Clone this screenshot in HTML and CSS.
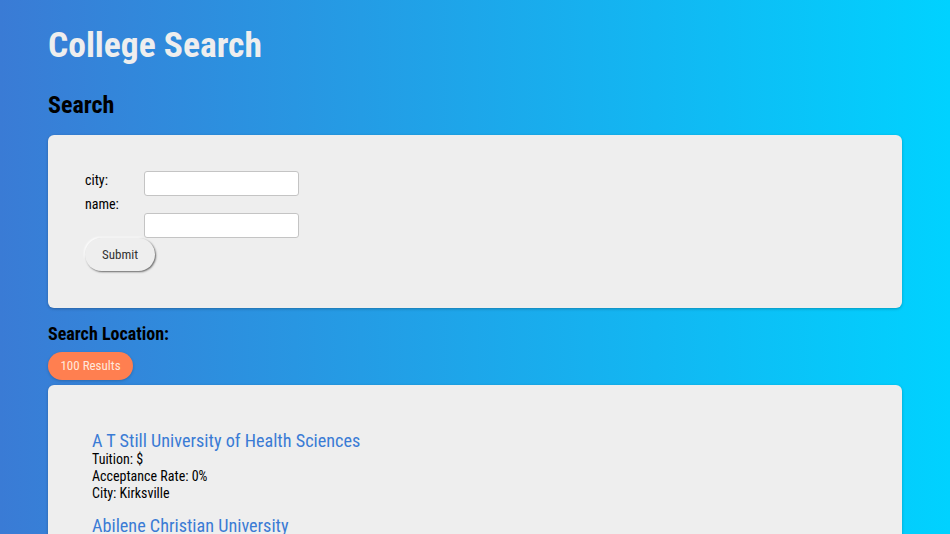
FILE: index.html
```html
<!DOCTYPE html>
<html>
<head>
<meta charset="utf-8">
<link rel="stylesheet" href="styles.css">
</head>
<body>
<div class="page">
  <h1 class="title">College Search</h1>
  <h2 class="section">Search</h2>
  <div class="card form-card">
    <form class="search-form">
      <div class="labels">
        <label>city:</label>
        <label>name:</label>
      </div>
      <div class="inputs">
        <input type="text" class="field">
        <input type="text" class="field">
      </div>
    </form>
    <button class="submit">Submit</button>
  </div>
  <h3 class="location">Search Location:</h3>
  <span class="badge">100 Results</span>
  <div class="card results">
    <div class="item">
      <a class="name" href="#">A T Still University of Health Sciences</a>
      <div class="line">Tuition: $</div>
      <div class="line">Acceptance Rate: 0%</div>
      <div class="line">City: Kirksville</div>
    </div>
    <div class="item">
      <a class="name" href="#">Abilene Christian University</a>
      <div class="line">Tuition: $</div>
      <div class="line">Acceptance Rate: 0%</div>
      <div class="line">City: Abilene</div>
    </div>
  </div>
</div>
</body>
</html>
```
FILE: styles.css
```css
html, body {
  margin: 0;
  padding: 0;
}
body {
  background: linear-gradient(to right, #3a7bd5, #00d2ff);
  font-family: "Roboto Condensed", "Liberation Sans Narrow", Roboto, sans-serif;
  min-height: 534px;
  overflow: hidden;
}
.page {
  padding: 0 48px;
}
.title {
  margin: 0;
  padding-top: 24px;
  font-size: 35.5px;
  line-height: 42px;
  font-weight: 700;
  color: #eeeeee;
}
.section {
  margin: 25px 0 0;
  font-size: 24px;
  line-height: 28px;
  font-weight: 700;
  color: #000;
}
.card {
  background: #eeeeee;
  border-radius: 6px;
  box-shadow: 0 1px 3px rgba(0,0,0,0.25);
}
.form-card {
  margin-top: 16px;
  height: 173px;
  box-sizing: border-box;
  padding: 33px 37px 0;
}
.search-form {
  display: flex;
}
.labels {
  display: flex;
  flex-direction: column;
  width: 59px;
}
.labels label {
  font-size: 14px;
  line-height: 24px;
  color: #000;
}
.inputs {
  display: flex;
  flex-direction: column;
  gap: 17px;
  padding-top: 3px;
}
.field {
  width: 155px;
  height: 25px;
  box-sizing: border-box;
  border: 1px solid #c4c4c4;
  border-radius: 3px;
  background: #fff;
  margin: 0;
}
.submit {
  display: block;
  width: 70px;
  height: 33px;
  border: none;
  border-radius: 17px;
  background: #eeeeee;
  font-family: inherit;
  font-size: 13px;
  color: #333;
  box-shadow: 1px 1px 2px #666, -1px -1px 2px #fff;
  padding: 0;
}
.location {
  margin: 15px 0 0;
  font-size: 18px;
  line-height: 21px;
  font-weight: 700;
  color: #000;
}
.badge {
  display: inline-block;
  margin-top: 8px;
  width: 85px;
  height: 28px;
  line-height: 28px;
  text-align: center;
  border-radius: 14px;
  background: #ff7f50;
  color: #ffe8dc;
  font-size: 13px;
  box-shadow: 0 1px 3px rgba(0,0,0,0.2);
}
.results {
  margin-top: 5px;
  padding: 46px 44px 40px;
  min-height: 200px;
}
.item {
  margin-bottom: 14px;
}
.name {
  display: block;
  font-size: 18.2px;
  line-height: 20px;
  color: #3a7bd5;
  text-decoration: none;
}
.line {
  font-size: 14px;
  line-height: 17px;
  color: #000;
}
```
